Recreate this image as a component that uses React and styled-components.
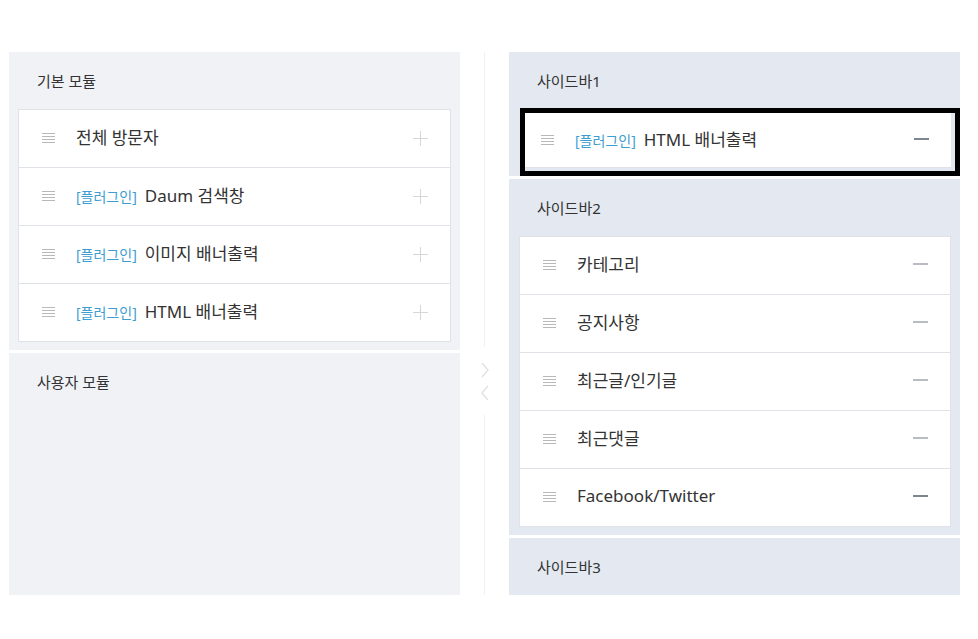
import React from 'react';
import styled, { createGlobalStyle } from 'styled-components';

const GlobalStyle = createGlobalStyle`
  html, body {
    margin: 0;
    padding: 0;
    background: #fff;
  }
  body {
    font-family: "Noto Sans", "Noto Sans CJK KR", sans-serif;
    color: #333;
  }
`;

const Page = styled.div`
  display: flex;
  align-items: stretch;
  padding: 52px 18px 0 9px;
  height: 543px;
`;

const Column = styled.div`
  width: 451px;
  display: flex;
  flex-direction: column;
  gap: 3px;
`;

const Section = styled.div`
  background: ${(p) => (p.$tone === 'blue' ? '#e4e9f1' : '#f0f2f6')};
  padding: 0 9px ${(p) => (p.$tight ? '0' : '8px')} ${(p) => (p.$tone === 'blue' ? '10px' : '9px')};
  flex: ${(p) => (p.$grow ? 1 : 'none')};
`;

const SectionTitle = styled.div`
  height: ${(p) => (p.$short ? '56px' : '57px')};
  display: flex;
  align-items: center;
  padding-left: ${(p) => (p.$inset ? '18px' : '19px')};
  font-size: 15px;
  color: #333;
`;

const Card = styled.div`
  background: #fff;
  border: 1px solid #dfe3e8;
  border-bottom: none;
`;

const Row = styled.div`
  height: 57px;
  display: flex;
  align-items: center;
  border-bottom: 1px solid #dfe3e8;
  padding: 0 22px 0 23px;
`;

const Handle = styled.span`
  width: 13px;
  height: 10px;
  display: inline-flex;
  flex-direction: column;
  justify-content: space-between;
  margin-right: 21px;
  margin-top: -1px;
  flex: none;
  span {
    display: block;
    height: 1px;
    background: #b8b8b8;
  }
`;

const Label = styled.span`
  flex: 1;
  display: flex;
  align-items: baseline;
  font-size: 17px;
  color: #333;
  white-space: nowrap;
  margin-top: -4px;
`;

const Plugin = styled.span`
  font-size: 14px;
  color: #3d9dd0;
  margin-right: 8px;
`;

const PlusIcon = styled.span`
  position: relative;
  width: 15px;
  height: 15px;
  flex: none;
  &::before, &::after {
    content: '';
    position: absolute;
    background: #d6d6d6;
  }
  &::before { left: 7px; top: 0; width: 1px; height: 15px; }
  &::after { top: 7px; left: 0; height: 1px; width: 15px; }
`;

const MinusIcon = styled.span`
  width: 15px;
  height: 2px;
  flex: none;
  margin-top: -3px;
  background: ${(p) => (p.$dark ? '#7d858f' : '#a2a7ae')};
  transform: scaleY(${(p) => (p.$dark ? 1 : 0.75)});
`;

const Divider = styled.div`
  width: 49px;
  display: flex;
  flex-direction: column;
  align-items: center;
`;

const DividerLine = styled.div`
  width: 1px;
  background: #eef1f5;
  height: ${(p) => (p.$h ? `${p.$h}px` : 'auto')};
  flex: ${(p) => (p.$h ? 'none' : 1)};
`;

const Chevrons = styled.div`
  height: 68px;
  display: flex;
  flex-direction: column;
  align-items: center;
  justify-content: center;
  gap: 7px;
  svg { display: block; }
`;

const Dragging = styled.div`
  border: 5px solid #000;
  margin: 0 -9px 0 1px;
  padding: 0 4px 3px 0;
  background: #e4e9f1;
  & > ${Card} {
    border: none;
  }
  & ${Row} {
    height: 54px;
    padding-left: 16px;
  }
`;

const Item = ({ plugin, text, action, dark }) => (
  <Row>
    <Handle><span /><span /><span /><span /></Handle>
    <Label>
      {plugin && <Plugin>[플러그인]</Plugin>}
      {text}
    </Label>
    {action === 'add' ? <PlusIcon /> : <MinusIcon $dark={dark} />}
  </Row>
);

const basics = [
  { text: '전체 방문자' },
  { plugin: true, text: 'Daum 검색창' },
  { plugin: true, text: '이미지 배너출력' },
  { plugin: true, text: 'HTML 배너출력' },
];

const sidebar2 = [
  { text: '카테고리' },
  { text: '공지사항' },
  { text: '최근글/인기글' },
  { text: '최근댓글' },
  { text: 'Facebook/Twitter', dark: true },
];

export default function App() {
  return (
    <>
      <GlobalStyle />
      <Page>
        <Column>
          <Section>
            <SectionTitle>기본 모듈</SectionTitle>
            <Card>
              {basics.map((b) => (
                <Item key={b.text} {...b} action="add" />
              ))}
            </Card>
          </Section>
          <Section $grow>
            <SectionTitle>사용자 모듈</SectionTitle>
          </Section>
        </Column>

        <Divider>
          <DividerLine $h={295} />
          <Chevrons>
            <svg width="10" height="16" viewBox="0 0 10 16" fill="none" stroke="#dde1e6" strokeWidth="1.3">
              <path d="M2 1l6 7-6 7" />
            </svg>
            <svg width="10" height="16" viewBox="0 0 10 16" fill="none" stroke="#dde1e6" strokeWidth="1.3">
              <path d="M8 1L2 8l6 7" />
            </svg>
          </Chevrons>
          <DividerLine />
        </Divider>

        <Column>
          <Section $tone="blue" $tight>
            <SectionTitle $short $inset>사이드바1</SectionTitle>
            <Dragging>
              <Card>
                <Item plugin text="HTML 배너출력" dark />
              </Card>
            </Dragging>
          </Section>
          <Section $tone="blue">
            <SectionTitle $inset>사이드바2</SectionTitle>
            <Card>
              {sidebar2.map((s) => (
                <Item key={s.text} {...s} />
              ))}
            </Card>
          </Section>
          <Section $tone="blue" $grow>
            <SectionTitle $inset>사이드바3</SectionTitle>
          </Section>
        </Column>
      </Page>
    </>
  );
}
